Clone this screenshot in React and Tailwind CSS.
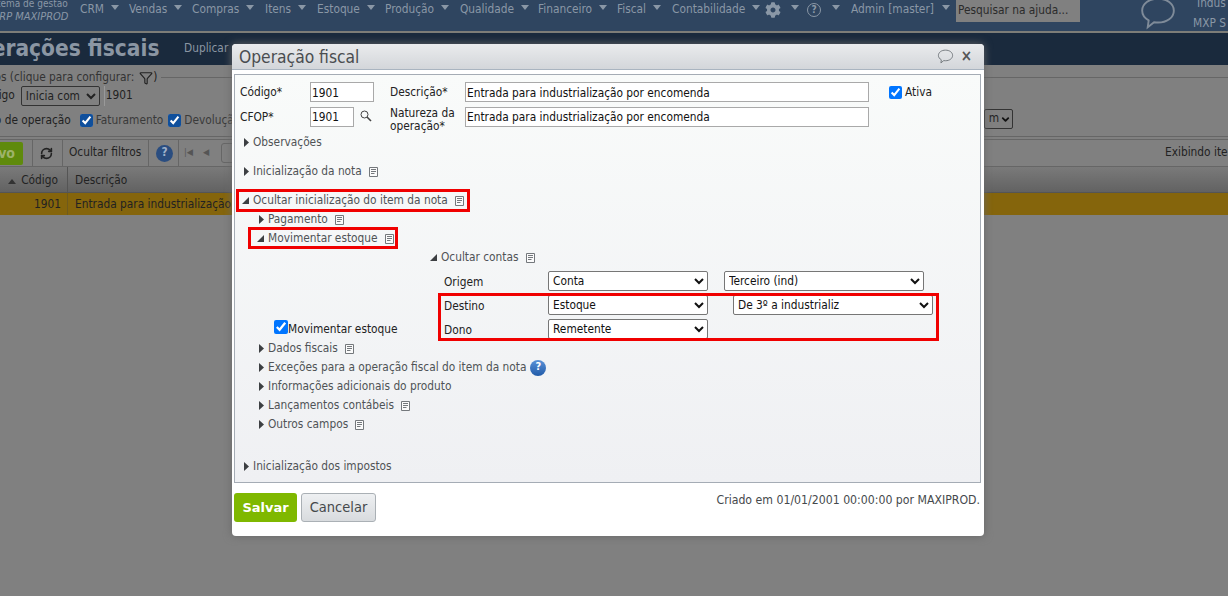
import { Filter, ChevronDown, RefreshCw } from "lucide-react";
import { FaCog } from "react-icons/fa";

const navItems = [
  { label: "CRM", width: "w-[49px]" },
  { label: "Vendas", width: "w-[63px]" },
  { label: "Compras", width: "w-[73px]" },
  { label: "Itens", width: "w-[52px]" },
  { label: "Estoque", width: "w-[68px]" },
  { label: "Produção", width: "w-[75px]" },
  { label: "Qualidade", width: "w-[78px]" },
  { label: "Financeiro", width: "w-[79px]" },
  { label: "Fiscal", width: "w-[55px]" },
  { label: "Contabilidade", width: "w-[93px]" },
];

function Caret({ className = "" }) {
  return (
    <svg width="8" height="5" viewBox="0 0 8 5" className={className}>
      <path d="M0 0h8L4 5z" fill="currentColor" />
    </svg>
  );
}

function DocIcon() {
  return (
    <svg width="9" height="10" viewBox="0 0 9 10" className="shrink-0 text-[#74787c]">
      <path d="M.5.5h8v9h-8z" fill="#fbfbfb" stroke="currentColor" />
      <path d="M2 2.500h5M2 4.500h5M2 6.500h3.500" stroke="currentColor" />
    </svg>
  );
}

function Arrow({ open }) {
  if (open) {
    return (
      <svg width="7" height="7" viewBox="0 0 7 7" className="mr-px shrink-0 text-[#3c3f42]">
        <path d="M7 0v7H0z" fill="currentColor" />
      </svg>
    );
  }
  return (
    <svg width="5" height="9" viewBox="0 0 5 9" className="mx-px shrink-0 text-[#3c3f42]">
      <path d="M0 0l5 4.500L0 9z" fill="currentColor" />
    </svg>
  );
}

function Section({ label, open, doc, help, className = "" }) {
  return (
    <div className={`flex h-[19px] items-center text-[#4f5356] ${className}`}>
      <Arrow open={open} />
      <span className="ml-[3px]">{label}</span>
      {doc && (
        <span className="ml-[7px] flex">
          <DocIcon />
        </span>
      )}
      {help && (
        <span className="ml-1 flex h-4 w-4 items-center justify-center rounded-full bg-gradient-to-b from-[#5b93d8] to-[#1f5aa8] text-[11px] font-bold text-white">
          ?
        </span>
      )}
    </div>
  );
}

function Field({ value, className = "" }) {
  return (
    <input
      readOnly
      value={value}
      className={`h-5 border border-[#a9a9a9] bg-white px-[1px] text-[#111] outline-none ${className}`}
    />
  );
}

function Select({ value, className = "" }) {
  return (
    <select
      value={value}
      onChange={() => {}}
      className={`h-5 rounded-[2px] border border-[#767676] bg-white text-[#111] ${className}`}
    >
      <option>{value}</option>
    </select>
  );
}

function RedBox({ className }) {
  return <div className={`pointer-events-none absolute border-[3px] border-[#f00000] ${className}`} />;
}

function ChatIcon({ size, className = "" }) {
  return (
    <svg width={size} height={size} viewBox="0 0 24 24" fill="none" stroke="currentColor" strokeWidth="1.2" className={className}>
      <path d="M12 3c5.500 0 10 3.100 10 7.500S17.500 18 12 18c-.9 0-1.700-.1-2.500-.2L5.500 21l.6-4.300C3.600 15.300 2 13.100 2 10.500 2 6.100 6.500 3 12 3z" />
    </svg>
  );
}

function TopBar() {
  return (
    <div className="flex h-[33px] shrink-0 overflow-hidden border-b-2 border-[#7d7d78] bg-[#2f4560] text-[#8a97a6]">
      <div className="ml-[-7px] flex w-[87px] shrink-0 flex-col whitespace-nowrap">
        <span className="ml-[-9px] mt-[-2px] text-[10px] leading-[12px]">Sistema de gestão</span>
        <span className="text-[11px] italic leading-[14px]">ERP MAXIPROD</span>
      </div>
      <div className="flex h-[19px] items-center">
        {navItems.map((item) => (
          <div key={item.label} className={`flex items-center ${item.width}`}>
            <span>{item.label}</span>
            <Caret className="ml-[7px] mb-[4px]" />
          </div>
        ))}
        <FaCog size={16} />
        <Caret className="ml-[10px] mb-[4px]" />
        <span className="ml-[8px] flex h-[14px] w-[14px] items-center justify-center rounded-full border border-current text-[10px] font-bold">?</span>
        <Caret className="ml-[11px] mb-[4px]" />
        <span className="ml-[11px] w-[85px] whitespace-nowrap">Admin [master]</span>
        <Caret className="ml-[6px] mb-[4px]" />
        <div className="ml-[6px] flex h-[22px] w-[124px] shrink-0 items-center self-start bg-[#808080] px-[2px] whitespace-nowrap text-[#2b2b2b]">Pesquisar na ajuda...</div>
      </div>
      <ChatIcon size={38} className="ml-[59px] mt-[-6px] shrink-0 text-[#7f8b99]" />
      <div className="ml-[16px] mt-[-7px] flex flex-col whitespace-nowrap leading-[20px]">
        <span className="ml-[4px]">Indus</span>
        <span>MXP S</span>
      </div>
    </div>
  );
}

function BackgroundPage() {
  return (
    <div className="flex h-full flex-col overflow-hidden bg-[#808080] text-[#222]">
      <TopBar />
      <div className="flex h-[32px] shrink-0 items-center whitespace-nowrap bg-[#1a2a3d] text-[#8b96a3]">
        <span className="ml-[-40px] w-[200px] shrink-0 text-[22.500px] font-bold">Operações fiscais</span>
        <span className="ml-[24px]">Duplicar</span>
      </div>
      <div className="relative h-[71px] shrink-0 whitespace-nowrap">
        <div className="flex h-[22px] items-center pt-[3px]">
          <span className="ml-[-25px] text-[#333]">Filtros (clique para configurar:</span>
          <Filter size={14} className="ml-[5px] text-[#222]" />
          <span>)</span>
          <div className="ml-1 h-px flex-1 bg-[#666]" />
        </div>
        <div className="mt-[-3px] flex h-[22px] items-center pt-[1px]">
          <span className="ml-[-22px]">Código</span>
          <select className="ml-[6px] h-[20px] w-[79px] rounded-[2px] border border-[#333]">
            <option>Inicia com</option>
          </select>
          <span className="ml-[4px] flex h-[20px] w-[130px] items-center border-l border-[#999] pl-[1px]">1901</span>
        </div>
        <div className="mt-[2px] flex h-[25px] items-center">
          <span className="ml-[-21px]">Tipo de operação</span>
          <input type="checkbox" readOnly checked className="ml-[9px] h-[13px] w-[13px] accent-[#0f4f9c]" />
          <span className="ml-[3px] text-[#3a3a3a]">Faturamento</span>
          <input type="checkbox" readOnly checked className="ml-[5px] h-[13px] w-[13px] accent-[#0f4f9c]" />
          <span className="ml-[3px] text-[#3a3a3a]">Devolução</span>
        </div>
        <div className="absolute left-[984px] top-[44px] flex h-[20px] w-[29px] items-center justify-end rounded-[2px] border border-[#333] pr-[1px]">
          <span className="mr-[1px]">m</span>
          <ChevronDown size={11} strokeWidth={4} className="text-[#111]" />
        </div>
      </div>
      <div className="flex h-[31px] shrink-0 flex-col border-b border-[#666] border-t border-t-[#666] pt-[2px]">
        <div className="flex h-[28px] items-center border-t border-[#666]">
          <div className="flex h-[23px] w-[23px] items-center justify-end rounded-r-[2px] bg-[#5f8a0c] pr-[8px] text-[14px] font-bold text-[#9db36a]">vo</div>
          <div className="ml-[9px] flex h-full w-[31px] items-center border-x border-[#666] pl-[7px]">
            <RefreshCw size={13} strokeWidth={3} />
          </div>
          <span className="ml-[6px] w-[74px] whitespace-nowrap">Ocultar filtros</span>
          <div className="ml-[5px] h-full border-l border-[#666]" />
          <span className="ml-[7px] flex h-[17px] w-[17px] items-center justify-center rounded-full bg-[#2a4d80] font-bold text-[#9fb0c8]">?</span>
          <div className="ml-[5px] h-full border-l border-[#666]" />
          <span className="ml-[5px] text-[9px] text-[#555]">|◀</span>
          <span className="ml-[10px] text-[9px] text-[#555]">◀</span>
          <div className="ml-[12px] h-[20px] w-[16px] rounded-[3px] border border-[#666]" />
          <span className="ml-auto mr-[-1px] w-[64px] overflow-hidden whitespace-nowrap">Exibindo ite</span>
        </div>
      </div>
      <div className="flex h-[26px] shrink-0 items-center border-b border-[#555] bg-gradient-to-b from-[#7a7a7a] to-[#626262]">
        <div className="flex h-full w-[68px] items-center justify-end border-r border-[#555] pr-[9px] pt-[3px]">
          <Caret className="mr-[5px] rotate-180 text-[#333]" />
          Código
        </div>
        <span className="ml-[7px] pt-[3px]">Descrição</span>
      </div>
      <div className="flex h-[22px] shrink-0 items-center whitespace-nowrap bg-[#85650c]">
        <div className="flex h-full w-[68px] items-center justify-end border-r border-[#6f5a1d] pr-[6px] pt-[2px]">1901</div>
        <span className="ml-[7px] pt-[2px]">Entrada para industrialização</span>
      </div>
    </div>
  );
}

function FiscalDialog() {
  return (
    <div className="absolute left-[232px] top-[44px] flex h-[492px] w-[752px] flex-col rounded-[4px] bg-white shadow-[0_0_8px_#666]">
      <div className="flex h-[26px] shrink-0 items-center justify-between rounded-t-[4px] border-b border-[#a9b4c0] bg-gradient-to-b from-[#eaebed] to-[#d3d6da] pl-[7px] pr-[12px]">
        <span className="mt-[2px] text-[17.300px] text-[#4a4d50]">Operação fiscal</span>
        <div className="flex items-center gap-[7px] text-[#666b70]">
          <ChatIcon size={17} />
          <span className="text-[15px] font-bold leading-none text-[#555]">×</span>
        </div>
      </div>

      <div className="relative ml-[2px] mr-[3px] mt-[4px] h-[409px] border border-[#a5acb5] bg-gradient-to-b from-[#f9fbfa] to-[#eff0f3] pl-[5px] pt-[7px] text-[#222]">
        {/* Fields */}
        <div className="flex h-[20px] items-center">
          <span className="w-[70px] pt-[1px]">Código*</span>
          <Field value="1901" className="w-[64px] pt-[1px]" />
          <span className="ml-[16px] w-[75px] pt-[1px]">Descrição*</span>
          <Field value="Entrada para industrialização por encomenda" className="w-[404px] pt-[1px]" />
          <input type="checkbox" readOnly checked className="ml-[20px] h-[13px] w-[13px]" />
          <span className="ml-[3px] pt-[1px]">Ativa</span>
        </div>
        <div className="mt-[5px] flex h-[20px] items-start">
          <span className="mt-[2px] w-[70px]">CFOP*</span>
          <Field value="1901" className="w-[44px]" />
          <svg width="12" height="12" viewBox="0 0 12 12" fill="none" stroke="#444" className="ml-[6px] mt-[3px]">
            <circle cx="4.500" cy="4.500" r="3.500" />
            <path d="M7 7l4 4" strokeWidth="1.600" />
          </svg>
          <span className="ml-[18px] w-[75px] leading-[13px]">Natureza da operação*</span>
          <Field value="Entrada para industrialização por encomenda" className="w-[404px]" />
        </div>

        <div className="mt-[6px] flex h-[29px] flex-col pl-[3px]">
          <Section label="Observações" />
        </div>
        <Section label="Inicialização da nota" doc className="pl-[3px]" />
        <Section label="Ocultar inicialização do item da nota" open doc className="mt-[10px] pl-[2px]" />
        <div className="pl-[18px]">
          <Section label="Pagamento" doc />
          <Section label="Movimentar estoque" open doc className="ml-[-1px]" />

          {/* Movimentar estoque block */}
          <div className="flex h-[91px]">
            <label className="ml-[16px] flex w-[157px] shrink-0 items-end whitespace-nowrap">
              <input type="checkbox" readOnly checked className="mb-[5px] h-[14px] w-[14px]" />
              <span>Movimentar estoque</span>
            </label>
            <div>
              <Section label="Ocultar contas" open doc className="ml-[-1px]" />
              <div className="mt-[2px] flex h-[24px] items-center">
                <span className="w-[117px] pl-[13px] pt-[4px]">Origem</span>
                <Select value="Conta" className="w-[160px]" />
                <Select value="Terceiro (ind)" className="ml-[16px] w-[200px]" />
              </div>
              <div className="flex h-[24px] items-center">
                <span className="w-[117px] pl-[13px] pt-[4px]">Destino</span>
                <Select value="Estoque" className="w-[160px]" />
                <Select value="De 3º a industrializ" className="ml-[25px] w-[200px]" />
              </div>
              <div className="flex h-[24px] items-center">
                <span className="w-[117px] pl-[13px] pt-[4px]">Dono</span>
                <Select value="Remetente" className="w-[160px]" />
              </div>
            </div>
          </div>

          <Section label="Dados fiscais" doc />
          <Section label="Exceções para a operação fiscal do item da nota" help />
          <Section label="Informações adicionais do produto" />
          <Section label="Lançamentos contábeis" doc />
          <Section label="Outros campos" doc />
        </div>
        <Section label="Inicialização dos impostos" className="mt-[23px] pl-[3px]" />

        <RedBox className="left-[1px] top-[114px] h-[23px] w-[234px]" />
        <RedBox className="left-[13px] top-[152px] h-[22px] w-[150px]" />
        <RedBox className="left-[203px] top-[218px] h-[48px] w-[501px]" />
      </div>

      <div className="mt-[10px] flex items-start justify-between pl-[2px] pr-[4px]">
        <div className="flex gap-[4px]">
          <button className="h-[29px] w-[63px] rounded-[3px] bg-[#7fb800] font-['DejaVu_Sans',sans-serif] text-[13px] font-bold text-white">Salvar</button>
          <button className="h-[29px] w-[75px] rounded-[3px] border border-[#aab0b5] bg-gradient-to-b from-[#eef0f2] to-[#d8dbde] text-[14.500px] text-[#45494c]">Cancelar</button>
        </div>
        <span className="mt-[-2px] text-[12.200px] text-[#45494c]">Criado em 01/01/2001 00:00:00 por MAXIPROD.</span>
      </div>
    </div>
  );
}

export default function App() {
  return (
    <div className="relative h-[596px] w-[1228px] overflow-hidden font-['DejaVu_Sans_Condensed','DejaVu_Sans',sans-serif] text-[11.800px]">
      <BackgroundPage />
      <FiscalDialog />
    </div>
  );
}
